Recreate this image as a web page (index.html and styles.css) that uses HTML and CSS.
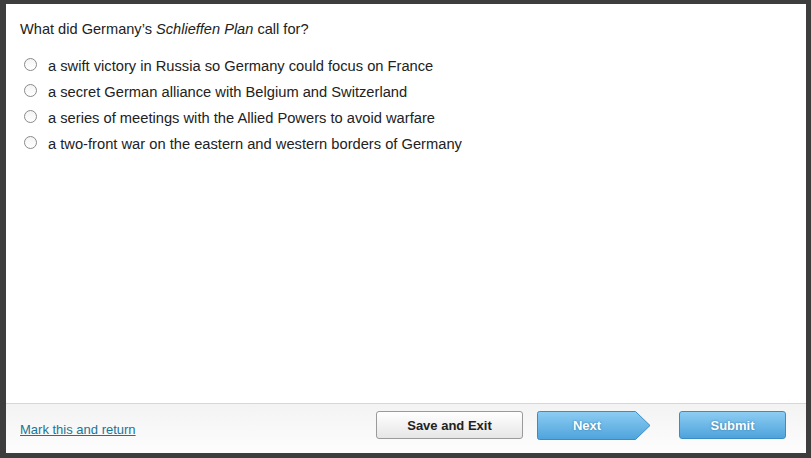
FILE: index.html
```html
<!DOCTYPE html>
<html>
<head>
<meta charset="utf-8">
<link rel="stylesheet" href="styles.css">
</head>
<body>
<div class="frame">
  <div class="content">
    <p class="question">What did Germany’s <em>Schlieffen Plan</em> call for?</p>
    <ul class="options">
      <li><span class="radio"></span><span>a swift victory in Russia so Germany could focus on France</span></li>
      <li><span class="radio"></span><span>a secret German alliance with Belgium and Switzerland</span></li>
      <li><span class="radio"></span><span>a series of meetings with the Allied Powers to avoid warfare</span></li>
      <li><span class="radio"></span><span>a two-front war on the eastern and western borders of Germany</span></li>
    </ul>
  </div>
  <div class="footer">
    <a class="mark" href="#">Mark this and return</a>
    <div class="actions">
      <button class="btn btn-save">Save and Exit</button>
      <button class="btn btn-next">
        <svg class="next-shape" width="114" height="29" viewBox="0 0 114 29">
          <defs>
            <linearGradient id="g1" x1="0" y1="0" x2="0" y2="1">
              <stop offset="0" stop-color="#8dcdf2"/>
              <stop offset="1" stop-color="#4ea3dc"/>
            </linearGradient>
          </defs>
          <path d="M2.5 0.5 H98.5 L113 14.5 L98.5 28.5 H2.5 Q0.5 28.5 0.5 26.5 V2.5 Q0.5 0.5 2.5 0.5 Z" fill="url(#g1)" stroke="#3a8cc4"/>
        </svg>
        <span class="next-label">Next</span>
      </button>
      <button class="btn btn-submit">Submit</button>
    </div>
  </div>
</div>
</body>
</html>
```
FILE: styles.css
```css
html, body {
  margin: 0;
  padding: 0;
  background: #3d3d3d;
  font-family: "Liberation Sans", Arial, sans-serif;
}
.frame {
  margin: 4px 5px 5px 6px;
  height: 449px;
  background: #fff;
  display: flex;
  flex-direction: column;
}
.content {
  flex: 1;
  padding: 19px 14px 0 14px;
}
.question {
  margin: 0;
  font-size: 14.6px;
  line-height: 13px;
  color: #222;
}
.question em {
  font-style: italic;
}
.options {
  list-style: none;
  margin: 17px 0 0 0;
  padding: 0;
}
.options li {
  display: flex;
  align-items: center;
  height: 26px;
  font-size: 14.7px;
  color: #222;
}
.radio {
  width: 11px;
  height: 11px;
  border: 1px solid #8a8a8a;
  border-radius: 50%;
  background: linear-gradient(#f4f4f4, #ffffff);
  margin: -3px 11px 0 4px;
  flex: none;
}
.footer {
  height: 50px;
  border-top: 1px solid #d6d6d6;
  background: linear-gradient(#f3f3f3, #fdfdfd);
  display: flex;
  align-items: center;
  justify-content: space-between;
  padding: 0 20px 0 14px;
  box-sizing: border-box;
}
.mark {
  font-size: 13px;
  color: #1b7496;
  text-decoration: underline;
  margin-top: 2px;
}
.actions {
  display: flex;
  align-items: center;
  margin-top: -7px;
}
.btn {
  font-family: "Liberation Sans", Arial, sans-serif;
  font-weight: bold;
  font-size: 13px;
  height: 28px;
  border-radius: 3px;
  cursor: pointer;
  padding: 0;
}
.btn-save {
  width: 147px;
  color: #222;
  border: 1px solid #9a9a9a;
  background: linear-gradient(#ffffff, #e6e6e6);
}
.btn-next {
  position: relative;
  width: 114px;
  height: 29px;
  border: none;
  background: none;
  margin-left: 14px;
  margin-right: 28px;
}
.next-shape {
  position: absolute;
  left: 0;
  top: 0;
}
.next-label {
  position: relative;
  display: block;
  width: 100px;
  color: #fff;
  text-shadow: 0 0 2px #2a6e9e;
}
.btn-submit {
  width: 107px;
  color: #fff;
  text-shadow: 0 0 2px #2a6e9e;
  border: 1px solid #3a8cc4;
  background: linear-gradient(#8dcdf2, #4ea3dc);
}
```
